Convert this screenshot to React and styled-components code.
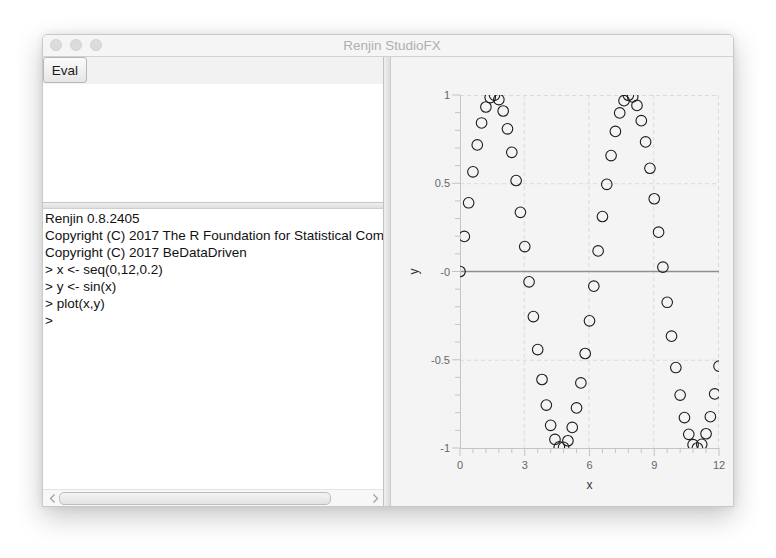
import React from 'react';
import styled, { createGlobalStyle } from 'styled-components';

const GlobalStyle = createGlobalStyle`
  html, body {
    margin: 0;
    padding: 0;
    background: #ffffff;
  }
  body {
    font-family: 'Liberation Sans', Arial, sans-serif;
  }
`;

const Page = styled.div`
  width: 776px;
  height: 558px;
  padding: 34px 0 0 42px;
  box-sizing: border-box;
`;

const Window = styled.div`
  width: 692px;
  height: 473px;
  box-sizing: border-box;
  border: 1px solid #c9c9c9;
  border-radius: 5px 5px 0 0;
  background: #f3f3f3;
  box-shadow: 0 10px 28px rgba(0, 0, 0, 0.22), 0 0 8px rgba(0, 0, 0, 0.08);
  display: flex;
  flex-direction: column;
  overflow: hidden;
`;

const TitleBar = styled.div`
  height: 21px;
  flex-shrink: 0;
  border-bottom: 1px solid #d2d2d2;
  background: #f5f5f5;
  position: relative;
  display: flex;
  align-items: center;
  justify-content: center;
`;

const Lights = styled.div`
  position: absolute;
  left: 7px;
  top: 4px;
  display: flex;
  gap: 8px;
`;

const Light = styled.span`
  width: 12px;
  height: 12px;
  border-radius: 50%;
  box-sizing: border-box;
  background: #dcdcdc;
  border: 1px solid #d0d0d0;
`;

const Title = styled.div`
  font-size: 13.5px;
  color: #afafaf;
  margin-left: 8px;
`;

const Body = styled.div`
  flex: 1;
  display: flex;
  min-height: 0;
`;

const LeftPane = styled.div`
  width: 340px;
  display: flex;
  flex-direction: column;
  background: #ffffff;
`;

const Toolbar = styled.div`
  height: 27px;
  flex-shrink: 0;
  background: #f2f2f2;
  display: flex;
  align-items: flex-start;
`;

const EvalButton = styled.button`
  width: 44px;
  height: 26px;
  box-sizing: border-box;
  border: 1px solid #b7b7b7;
  border-radius: 3px;
  background: linear-gradient(#fbfbfb, #e6e6e6);
  font-family: 'Liberation Sans', Arial, sans-serif;
  font-size: 13.5px;
  color: #1a1a1a;
  padding: 0;
  margin: 0;
`;

const Editor = styled.div`
  height: 118px;
  flex-shrink: 0;
  background: #ffffff;
`;

const HDivider = styled.div`
  height: 7px;
  flex-shrink: 0;
  box-sizing: border-box;
  border-top: 1px solid #c6c6c6;
  border-bottom: 1px solid #cfcfcf;
  background: linear-gradient(#f0f0f0, #dedede);
`;

const Console = styled.div`
  flex: 1;
  overflow: hidden;
  padding: 1px 0 0 2px;
  background: #ffffff;
  font-size: 13.5px;
  line-height: 17px;
  color: #111111;
  white-space: pre;
`;

const HScroll = styled.div`
  height: 17px;
  flex-shrink: 0;
  box-sizing: border-box;
  border-top: 1px solid #e4e4e4;
  background: #f7f7f7;
  display: flex;
  align-items: center;
  padding: 0 3px 0 5px;
  gap: 2px;
`;

const Thumb = styled.div`
  width: 272px;
  height: 13px;
  box-sizing: border-box;
  border: 1px solid #bdbdbd;
  border-radius: 5px;
  background: linear-gradient(#f4f4f4, #e2e2e2);
`;

const Spacer = styled.div`
  flex: 1;
`;

const VDivider = styled.div`
  width: 8px;
  flex-shrink: 0;
  box-sizing: border-box;
  border-left: 1px solid #c2c2c2;
  border-right: 1px solid #cacaca;
  background: linear-gradient(90deg, #efefef, #dcdcdc);
`;

const PlotPane = styled.div`
  flex: 1;
  background: #f4f4f4;
`;

const Arrow = ({ dir }) => (
  <svg width="9" height="11" viewBox="0 0 9 11">
    <path
      d={dir === 'left' ? 'M6.5 1.5 L2.5 5.5 L6.5 9.5' : 'M2.5 1.5 L6.5 5.5 L2.5 9.5'}
      fill="none"
      stroke="#9c9c9c"
      strokeWidth="1.2"
    />
  </svg>
);

// plot geometry, in pane coordinates
const X0 = 69;
const X1 = 328;
const YT = 38;
const YB = 391;
const sx = (v) => X0 + (v / 12) * (X1 - X0);
const sy = (v) => YB - ((v + 1) / 2) * (YB - YT);

const Plot = () => {
  const points = [];
  for (let i = 0; i <= 60; i++) {
    const x = i * 0.2;
    points.push([sx(x), sy(Math.sin(x))]);
  }
  const yTicks = [];
  for (let i = 0; i <= 20; i++) {
    const v = -1 + i * 0.1;
    const major = i % 5 === 0;
    yTicks.push(
      <line key={'yt' + i} x1={X0 - (major ? 8 : 5)} x2={X0} y1={sy(v)} y2={sy(v)} stroke="#c4c4c4" />
    );
  }
  const xTicks = [];
  for (let i = 0; i <= 20; i++) {
    const v = i * 0.6;
    const major = i % 5 === 0;
    xTicks.push(
      <line key={'xt' + i} x1={sx(v)} x2={sx(v)} y1={YB} y2={YB + (major ? 8 : 5)} stroke="#c4c4c4" />
    );
  }
  const labelStyle = { fontFamily: "'Liberation Sans', Arial, sans-serif", fontSize: 11, fill: '#666666' };
  return (
    <svg width="342" height="449" viewBox="0 0 342 449">
      <defs>
        <clipPath id="plotArea">
          <rect x={X0} y={YT} width={X1 - X0} height={YB - YT} />
        </clipPath>
      </defs>
      {[3, 6, 9, 12].map((v) => (
        <line key={'gx' + v} x1={sx(v) - 0.5} x2={sx(v) - 0.5} y1={YT} y2={YB} stroke="#dadada" strokeDasharray="4 3" />
      ))}
      {[1, 0.5, -0.5].map((v) => (
        <line key={'gy' + v} x1={X0} x2={X1} y1={sy(v) + 0.5} y2={sy(v) + 0.5} stroke="#dadada" strokeDasharray="4 3" />
      ))}
      <line x1={X0} x2={X1} y1={sy(0)} y2={sy(0)} stroke="#8f8f8f" strokeWidth="1.6" />
      <line x1={X0 + 0.5} x2={X0 + 0.5} y1={YT} y2={YB} stroke="#c4c4c4" />
      <line x1={X0} x2={X1} y1={YB + 0.5} y2={YB + 0.5} stroke="#c4c4c4" />
      {yTicks}
      {xTicks}
      <g clipPath="url(#plotArea)">
        {points.map(([x, y], i) => (
          <circle key={i} cx={x} cy={y} r="5.3" fill="none" stroke="#1c1c1c" strokeWidth="1.1" />
        ))}
      </g>
      {[
        [1, '1'],
        [0.5, '0.5'],
        [0, '-0'],
        [-0.5, '-0.5'],
        [-1, '-1'],
      ].map(([v, t]) => (
        <text key={'yl' + t} x={X0 - 10} y={sy(v) + 4} textAnchor="end" style={labelStyle}>
          {t}
        </text>
      ))}
      {[0, 3, 6, 9, 12].map((v) => (
        <text key={'xl' + v} x={sx(v)} y={YB + 21} textAnchor="middle" style={labelStyle}>
          {v}
        </text>
      ))}
      <text x={sx(6)} y={YB + 41} textAnchor="middle" style={{ ...labelStyle, fontSize: 12, fill: '#333333' }}>
        x
      </text>
      <text
        x={27}
        y={sy(0)}
        textAnchor="middle"
        transform={`rotate(-90 27 ${sy(0)})`}
        style={{ ...labelStyle, fontSize: 12, fill: '#333333' }}
      >
        y
      </text>
    </svg>
  );
};

const consoleLines = [
  'Renjin 0.8.2405',
  'Copyright (C) 2017 The R Foundation for Statistical Computing',
  'Copyright (C) 2017 BeDataDriven',
  '> x <- seq(0,12,0.2)',
  '> y <- sin(x)',
  '> plot(x,y)',
  '>',
];

const App = () => (
  <Page>
    <GlobalStyle />
    <Window>
      <TitleBar>
        <Lights>
          <Light />
          <Light />
          <Light />
        </Lights>
        <Title>Renjin StudioFX</Title>
      </TitleBar>
      <Body>
        <LeftPane>
          <Toolbar>
            <EvalButton>Eval</EvalButton>
          </Toolbar>
          <Editor />
          <HDivider />
          <Console>
            {consoleLines.map((l, i) => (
              <div key={i}>{l}</div>
            ))}
          </Console>
          <HScroll>
            <Arrow dir="left" />
            <Thumb />
            <Spacer />
            <Arrow dir="right" />
          </HScroll>
        </LeftPane>
        <VDivider />
        <PlotPane>
          <Plot />
        </PlotPane>
      </Body>
    </Window>
  </Page>
);

export default App;
